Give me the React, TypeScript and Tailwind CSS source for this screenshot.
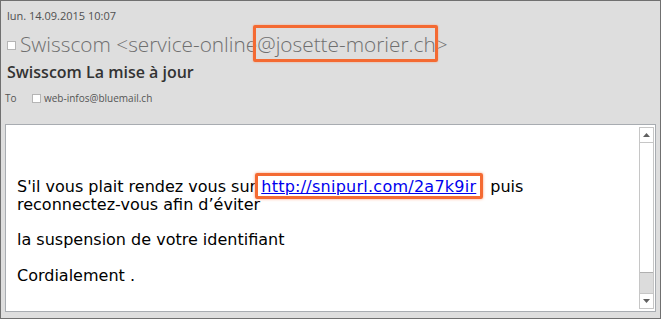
import React from 'react';

const Check: React.FC = () => (
    <span className="inline-block w-[9px] h-[9px] bg-white border border-[#b5b5b5] shrink-0" />
);

const Scrollbar: React.FC = () => (
    <div className="w-[15px] mt-[2px] mr-[1px] mb-[2px] flex flex-col border border-[#c6c6c6] bg-white">
        <div className="h-[15px] flex items-center justify-center border-b border-[#c6c6c6]">
            <svg width="7" height="4" viewBox="0 0 7 4"><path d="M0 4 L3.5 0 L7 4 Z" fill="#606060" /></svg>
        </div>
        <div className="flex-1 border-b border-[#b0b0b0]" />
        <div className="h-[20px] bg-[#dcdcdc]" />
        <div className="h-[15px] flex items-center justify-center border-t border-[#c6c6c6]">
            <svg width="7" height="4" viewBox="0 0 7 4"><path d="M0 0 L3.5 4 L7 0 Z" fill="#606060" /></svg>
        </div>
    </div>
);

const App: React.FC = () => {
    return (
        <div className="w-[661px] h-[319px] bg-[#dedede] border border-[#707070] flex flex-col overflow-hidden font-['Open_Sans',sans-serif]">
            {/* Header */}
            <div className="h-[123px] flex flex-col">
                <div className="mt-[6px] h-[18px] pl-[6px] flex items-center text-[11px] text-[#505050]">
                    lun. 14.09.2015 10:07
                </div>
                <div className="mt-[3px] h-[34px] pl-[6px] flex items-center gap-[4px] text-[20.8px] font-light text-[#6f6f6f]">
                    <Check />
                    <span className="whitespace-nowrap">
                        Swisscom &lt;service-online
                        <span className="relative">
                            @josette-morier.ch
                            <span className="absolute -left-[4px] -right-[2px] -top-[5px] -bottom-[4px] border-[3px] border-[#f46a32] rounded-[2px] shadow-[0_0_2px_#f9a07a]" />
                        </span>
                        &gt;
                    </span>
                </div>
                <div className="mt-[1px] h-[18px] pl-[6px] flex items-center text-[16px] font-semibold text-[#333]">
                    Swisscom La mise à jour
                </div>
                <div className="mt-[10px] h-[14px] pl-[4px] flex items-center text-[10px] text-[#555]">
                    <span className="w-[27px]">To</span>
                    <Check />
                    <span className="ml-[3px]">web-infos@bluemail.ch</span>
                </div>
            </div>

            {/* Body */}
            <div className="ml-[4px] mr-[4px] h-[188px] bg-white border border-[#a8acb1] flex">
                <div className="flex-1 pl-[11px] pt-[53px] font-['DejaVu_Sans',sans-serif] text-[16px] leading-[18px] text-black">
                    <p>
                        S'il vous plait rendez vous sur{' '}
                        <span className="relative">
                            <a href="#" className="text-[#0000ee] underline tracking-[0.25px]">http://snipurl.com/2a7k9ir</a>
                            <span className="absolute -left-[6px] -right-[7px] -top-[4px] -bottom-[3px] border-[3px] border-[#f46a32] rounded-[2px] shadow-[0_0_3px_#f9a07a]" />
                        </span>
                        <span className="ml-[14px]">puis</span>
                        <br />
                        reconnectez-vous afin d’éviter
                    </p>
                    <p className="mt-[17px]">la suspension de votre identifiant</p>
                    <p className="mt-[18px]">Cordialement .</p>
                </div>
                <Scrollbar />
            </div>
        </div>
    );
};

export default App;
